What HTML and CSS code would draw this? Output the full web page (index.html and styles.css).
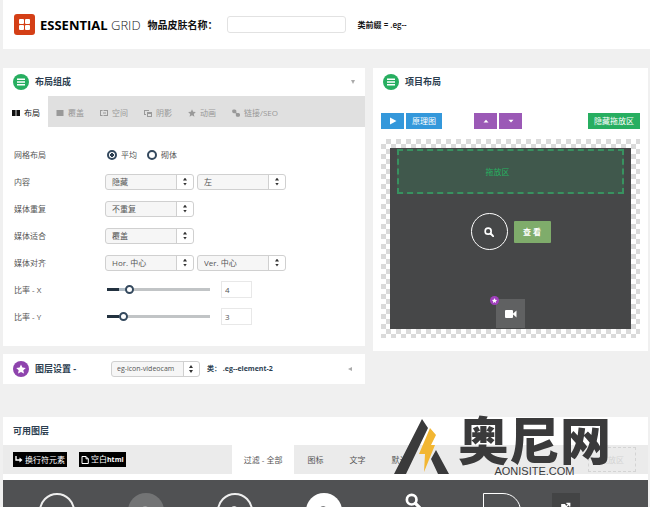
FILE: index.html
```html
<!DOCTYPE html>
<html lang="zh-CN">
<head>
<meta charset="utf-8">
<meta name="viewport" content="width=device-width, initial-scale=1">
<title>Essential Grid</title>
<link rel="stylesheet" href="styles.css">
</head>
<body>
<svg class="defs" aria-hidden="true">
  <symbol id="i-lines" viewBox="0 0 16 16"><circle cx="8" cy="8" r="8"/><path d="M4 5.2h8M4 8h8M4 10.8h8" stroke="#fff" stroke-width="1.4"/></symbol>
  <symbol id="i-star" viewBox="0 0 10 10"><path d="M5 .4 6.4 3.5 9.8 3.9 7.3 6.2 8 9.6 5 7.9 2 9.6 2.7 6.2.2 3.9 3.6 3.5z"/></symbol>
  <symbol id="i-search" viewBox="0 0 12 12"><circle cx="5" cy="5" r="3.6" fill="none" stroke="currentColor" stroke-width="2"/><path d="M7.8 7.8 11 11" stroke="currentColor" stroke-width="2.4" stroke-linecap="round"/></symbol>
</svg>
<header class="top">
  <svg class="logo" viewBox="0 0 21 21" aria-hidden="true"><rect width="21" height="21" rx="3" fill="#d43f16"/><g fill="#fff"><rect x="5" y="5" width="5" height="5" rx="1"/><rect x="11" y="5" width="5" height="5" rx="1"/><rect x="5" y="11" width="5" height="5" rx="1"/><rect x="11" y="11" width="5" height="5" rx="1"/></g></svg>
  <h1 class="brand"><b>ESSENTIAL</b> GRID</h1>
  <label class="skin-label" for="skin">物品皮肤名称：</label>
  <input class="skin-input" id="skin" type="text">
  <span class="prefix">类前缀 = .eg--</span>
</header>

<main>
  <div class="columns">
    <div class="left">
      <section class="panel composition">
        <h2 class="panel-head"><svg class="badge green"><use href="#i-lines"/></svg>布局组成<span class="toggle down"></span></h2>
        <nav class="tabs">
          <button class="tab active"><svg viewBox="0 0 8 8"><path d="M0 1h3.6v6H0zM4.4 1H8v6H4.4z"/></svg>布局</button>
          <button class="tab"><svg viewBox="0 0 8 8"><path d="M.5 1h7v6h-7z"/></svg>覆盖</button>
          <button class="tab"><svg viewBox="0 0 8 8"><path d="M0 1h8v6H3.5V6H7V2H3.5V1zM0 1h2.6v1H1v4h1.6v1H0zM3 3.5h3v1H3z"/></svg>空间</button>
          <button class="tab"><svg viewBox="0 0 8 8"><path d="M0 1h5v1H1v3h1v1H0zM3 3h5v5H3zm1 2v2h3V5z" fill-rule="evenodd"/></svg>阴影</button>
          <button class="tab"><svg><use href="#i-star"/></svg>动画</button>
          <button class="tab"><svg viewBox="0 0 8 8" fill="none" stroke="currentColor" stroke-width="1.2"><rect x=".8" y="1" width="3" height="2.6" rx="1"/><rect x="4.4" y="4.6" width="3" height="2.6" rx="1"/><path d="m3 3 2.4 2.4"/></svg>链接/SEO</button>
        </nav>
        <form class="fields">
          <div class="row"><span class="name">网格布局</span>
            <label class="choice"><input type="radio" name="grid" checked>平均</label>
            <label class="choice"><input type="radio" name="grid">砌体</label></div>
          <div class="row"><label class="name" for="content">内容</label>
            <span class="select"><select id="content"><option>隐藏</option></select></span>
            <span class="select"><select aria-label="对齐"><option>左</option></select></span></div>
          <div class="row"><label class="name" for="repeat">媒体重复</label>
            <span class="select"><select id="repeat"><option>不重复</option></select></span></div>
          <div class="row"><label class="name" for="fit">媒体适合</label>
            <span class="select"><select id="fit"><option>覆盖</option></select></span></div>
          <div class="row"><label class="name" for="align">媒体对齐</label>
            <span class="select"><select id="align"><option>Hor. 中心</option></select></span>
            <span class="select"><select aria-label="垂直"><option>Ver. 中心</option></select></span></div>
          <div class="row"><label class="name" for="rx">比率 - X</label>
            <input class="slider" id="rx" type="range" min="1" max="17" value="4"><input class="num" type="text" value="4" aria-label="X"></div>
          <div class="row"><label class="name" for="ry">比率 - Y</label>
            <input class="slider" id="ry" type="range" min="1" max="17" value="3"><input class="num" type="text" value="3" aria-label="Y"></div>
        </form>
      </section>
      <section class="panel layer">
        <h2 class="panel-head"><svg class="badge" viewBox="0 0 16 16"><circle cx="8" cy="8" r="8" fill="#8e44ad"/><use href="#i-star" x="3" y="3" width="10" height="10" fill="#fff"/></svg>图层设置 -</h2>
        <span class="select"><select aria-label="图层"><option>eg-icon-videocam</option></select></span>
        <b class="class-name">类： .eg--element-2</b>
        <span class="toggle side"></span>
      </section>
    </div>

    <section class="panel item">
      <h2 class="panel-head"><svg class="badge green"><use href="#i-lines"/></svg>项目布局</h2>
      <div class="tools">
        <div class="group">
          <button class="btn blue small" aria-label="播放"><svg viewBox="0 0 8 8"><path d="M1 .5 7.5 4 1 7.5z"/></svg></button>
          <button class="btn blue">原理图</button>
        </div>
        <div class="group purples">
          <button class="btn purple small" aria-label="上"><svg viewBox="0 0 8 8"><path d="M2 5.2 4 3l2 2.2z"/></svg></button>
          <button class="btn purple small" aria-label="下"><svg viewBox="0 0 8 8"><path d="M2 3h4L4 5.2z"/></svg></button>
        </div>
        <button class="btn green-btn">隐藏拖放区</button>
      </div>
      <div class="checker">
        <div class="stage">
          <div class="dropzone">拖放区</div>
          <div class="actions">
            <a class="ring" href="#" aria-label="放大"><svg><use href="#i-search"/></svg></a>
            <a class="view" href="#">查 看</a>
          </div>
          <div class="video">
            <svg class="cam" viewBox="0 0 12 8"><rect width="8" height="8" rx="1"/><path d="M7.5 4 11.5.5v7z"/></svg>
            <svg class="mark" viewBox="0 0 10 10"><circle cx="5" cy="5" r="5" fill="#a040bd"/><use href="#i-star" x="2" y="2" width="6" height="6" fill="#fff"/></svg>
          </div>
        </div>
      </div>
    </section>
  </div>

  <section class="panel available">
    <h2 class="panel-head">可用图层</h2>
    <div class="bar">
      <button class="black"><svg viewBox="0 0 8 8"><path d="M1 0v4h4" fill="none" stroke="currentColor" stroke-width="1.4"/><path d="M4.5 1.5 7.5 4l-3 2.5z"/></svg>换行符元素</button>
      <button class="black"><svg viewBox="0 0 8 8"><path d="M1 .5h4l2.3 2.3v4.7H1zM5 .5v2.3h2.3" fill="none" stroke="currentColor"/></svg><span>空白<b>html</b></span></button>
      <nav class="filters">
        <button class="filter active">过滤 - 全部</button>
        <button class="filter">图标</button>
        <button class="filter">文字</button>
        <button class="filter">默认</button>
      </nav>
      <span class="ghost">拖放区</span>
    </div>
    <div class="shelf">
      <span class="shape outline"></span>
      <span class="shape disc"><svg><use href="#i-search"/></svg></span>
      <span class="shape outline"><svg><use href="#i-search"/></svg></span>
      <span class="shape white"><svg><use href="#i-search"/></svg></span>
      <span class="shape glass"><svg><use href="#i-search"/></svg></span>
      <span class="shape quarter"></span>
      <span class="shape box"><svg viewBox="0 0 12 12" fill="none" stroke="currentColor" stroke-width="1.5"><path d="M5 3H1v8h8V8M5 7l5-5M6.5 1.5h4v4"/></svg></span>
    </div>
  </section>
</main>

<div class="watermark">
  <svg viewBox="0 0 56 56" aria-hidden="true"><path d="M28 0 34 9 12 55H0zM42 31l13 24H44L37 40z" fill="#3a3a3b"/><path d="m36 9 6 7-5 10h4L30 53l1-18h-6z" fill="#f2b632"/></svg>
  <div class="wm-text"><strong>奥尼网</strong><span>AONISITE.COM</span></div>
</div>
</body>
</html>
```

FILE: styles.css
```css
* { box-sizing: border-box; }

body {
  display: flex;
  flex-direction: column;
  margin: 0;
  height: 100vh;
  overflow: hidden;
  background: #f0f0f0;
  color: #555;
  font: 8px/12px "Open Sans", "Noto Sans CJK SC", sans-serif;
}

button, input, select { font: inherit; color: inherit; margin: 0; }
button { border: 0; padding: 0; cursor: pointer; }
a { text-decoration: none; }
svg { fill: currentColor; flex: none; }
.defs { display: none; }

.top {
  display: flex;
  flex: none;
  align-items: center;
  height: 49px;
  margin: 0 0 19px 3px;
  padding-left: 11px;
  background: #fff;
}
.logo { width: 21px; height: 21px; }
.brand { margin: 0 0 0 5px; font-size: 13px; line-height: 20px; font-weight: 300; color: #222; white-space: nowrap; }
.brand b { font-weight: 700; color: #000; }
.skin-label { margin-left: 7px; font-size: 10px; font-weight: 700; color: #111; width: 79px; white-space: nowrap; }
.skin-input { width: 119px; height: 17px; border: 1px solid #e2e2e2; border-radius: 3px; background: #fff; }
.prefix { margin-left: 12px; font-weight: 600; color: #111; white-space: nowrap; }

main { display: flex; flex: 1; flex-direction: column; min-height: 0; padding: 0 2px 0 3px; }
.columns { display: grid; flex: none; grid-template-columns: 362fr 275fr; gap: 8px; margin-bottom: 33px; align-items: start; }
.panel { background: #fff; }
.panel-head {
  display: flex;
  flex: none;
  align-items: center;
  gap: 6px;
  height: 28px;
  margin: 0;
  padding: 0 10px;
  font-size: 9px;
  font-weight: 700;
  color: #2c3e50;
  white-space: nowrap;
}
.badge { width: 16px; height: 16px; }
.green { color: #27ae60; }
.toggle { width: 4px; height: 4px; margin-left: auto; background: #aaa; }
.down { clip-path: polygon(0 0, 100% 0, 50% 100%); }
.side { clip-path: polygon(100% 0, 100% 100%, 0 50%); }

.tabs { display: flex; height: 31px; background: #e0e0e0; }
.tab { display: flex; align-items: center; gap: 4px; padding: 2px 8px 0; background: none; color: #999; }
.tab svg { width: 8px; height: 8px; }
.tab.active { padding-left: 9px; background: #fff; color: #111; }

.fields { padding: 14px 0 16px 11px; }
.row { display: flex; align-items: center; height: 27px; }
.name { width: 91px; }
.choice { display: flex; align-items: center; gap: 4px; margin: 0 10px 0 2px; }
.choice input {
  appearance: none;
  width: 10px;
  height: 10px;
  border: 2px solid #34495e;
  border-radius: 50%;
  background: #fff;
}
.choice input:checked { background: radial-gradient(circle, #2c3e50 0 2px, #fff 2px); }
.choice + .choice { margin-left: 0; }

.select {
  position: relative;
  display: block;
  flex: none;
  width: 89px;
  height: 16px;
  margin-right: 3px;
  border: 1px solid #d0d0d0;
  border-radius: 3px;
  background: linear-gradient(90deg, #f6f6f6 70px, #d0d0d0 70px 71px, #fff 71px);
}
.select select {
  display: block;
  appearance: none;
  width: 100%;
  height: 14px;
  padding: 0 17px 0 6px;
  border: 0;
  background: none;
  line-height: 12px;
}
.select::before, .select::after {
  content: "";
  position: absolute;
  right: 6px;
  width: 4px;
  height: 3px;
  background: #333;
}
.select::before { top: 3px; clip-path: polygon(50% 0, 100% 100%, 0 100%); }
.select::after { bottom: 3px; clip-path: polygon(0 0, 100% 0, 50% 100%); }

.slider {
  appearance: none;
  width: 103px;
  height: 10px;
  margin-left: 2px;
  background: linear-gradient(90deg, #22313f 12px, #aebbc5 12px 20px, #c1c4c6 20px) center / 100% 3px no-repeat;
}
.slider::-webkit-slider-thumb {
  appearance: none;
  width: 9px;
  height: 9px;
  border: 2px solid #34495e;
  border-radius: 50%;
  background: #fff;
}
.num { width: 31px; height: 17px; margin-left: 11px; padding: 0 3px; border: 1px solid #e8e8e8; background: #fff; }

.layer { display: flex; align-items: center; height: 30px; margin-top: 8px; padding-right: 13px; }
.layer .panel-head { width: 108px; }
.layer .select { background: linear-gradient(90deg, #f6f6f6 71px, #d0d0d0 71px 72px, #fff 72px); }
.layer select { padding: 0 14px 0 5px; font-size: 7px; }
.class-name { margin-left: 4px; font-size: 7px; color: #2c3e50; white-space: nowrap; }

.item { padding-bottom: 13px; }
.tools { display: flex; align-items: center; padding: 17px 8px 10px; }
.group { display: flex; gap: 2px; }
.purples { margin: 0 auto 0 32px; }
.btn { height: 16px; padding: 0 6px; color: #fff; line-height: 16px; white-space: nowrap; }
.btn svg { display: block; width: 8px; height: 8px; margin: 0 auto; }
.small { width: 23px; }
.blue { background: #3498db; }
.purple { background: #9b59b6; }
.purple svg { width: 10px; height: 10px; }
.green-btn { background: #27ae60; }
.checker {
  margin: 0 8px;
  padding: 9px;
  background: repeating-conic-gradient(#dadada 0 25%, #fff 0 50%) 0 0 / 10px 10px;
}
.stage { display: flex; flex-direction: column; height: 181px; padding: 1px 7px; background: #464748; }
.dropzone {
  height: 45px;
  border: 2px dashed #389260;
  background: #40584c;
  color: #27ae60;
  line-height: 41px;
  text-align: center;
  padding-right: 26px;
}
.actions { display: flex; align-items: center; justify-content: center; gap: 6px; margin-top: 19px; }
.ring { display: grid; place-items: center; width: 37px; height: 37px; border: 1px solid #fff; border-radius: 50%; color: #fff; }
.ring svg { width: 10px; height: 10px; }
.view { width: 37px; height: 22px; border-radius: 1px; background: #7fac6b; color: #fff; font-weight: 700; line-height: 22px; text-align: center; }
.video { position: relative; display: grid; place-items: center; width: 29px; height: 29px; margin: auto auto 0; background: #606162; color: #fff; }
.cam { width: 12px; height: 8px; }
.mark { position: absolute; left: -6px; top: -3px; width: 9px; height: 9px; }

.available { display: flex; flex: 1; flex-direction: column; min-height: 0; }
.bar { display: flex; flex: none; align-items: center; height: 29px; margin-bottom: 6px; padding: 0 12px 0 10px; background: #ebebeb; }
.black { display: flex; align-items: center; gap: 2px; height: 15px; margin-right: 12px; padding: 0 2px; background: #000; color: #fff; white-space: nowrap; }
.black svg { width: 8px; height: 8px; }
.black b { font-size: 7px; }
.filters { display: flex; height: 100%; margin-left: 94px; }
.filter { padding: 0 13px; background: none; white-space: nowrap; }
.filter.active { padding: 0 12px; background: #fff; }
.ghost { width: 48px; height: 25px; margin-left: auto; border: 1px dashed #d4d4d4; color: #d4d4d4; line-height: 23px; text-align: center; }

.shelf {
  display: grid;
  flex: 1;
  grid-template-columns: repeat(6, 89fr) 40fr;
  justify-items: center;
  align-items: start;
  min-height: 0;
  overflow: hidden;
  padding: 13px 62px 0 10px;
  background: #505153;
  color: #fff;
}
.shape { display: grid; place-items: center; width: 36px; height: 36px; }
.shape svg { width: 10px; height: 10px; }
.outline { border: 2px solid #eee; border-radius: 50%; }
.disc { border-radius: 50%; background: #737475; color: #aaa; }
.white { border-radius: 50%; background: #fff; color: #505153; }
.glass { place-items: start center; }
.glass svg { width: 16px; height: 16px; }
.quarter { border: 1px solid #fff; border-radius: 0 20px 20px 0; width: 38px; }
.box { width: 28px; height: 28px; background: #434445; }

.watermark { position: absolute; left: 394px; top: 419px; display: flex; gap: 8px; color: #3a3a3b; pointer-events: none; }
.watermark svg { width: 56px; height: 56px; }
.wm-text { display: flex; flex-direction: column; align-items: center; }
.wm-text strong { font: 900 51px/38px "Noto Sans CJK SC", sans-serif; }
.wm-text span { margin-top: 6px; font: 11px/16px "Liberation Sans", sans-serif; }
```
